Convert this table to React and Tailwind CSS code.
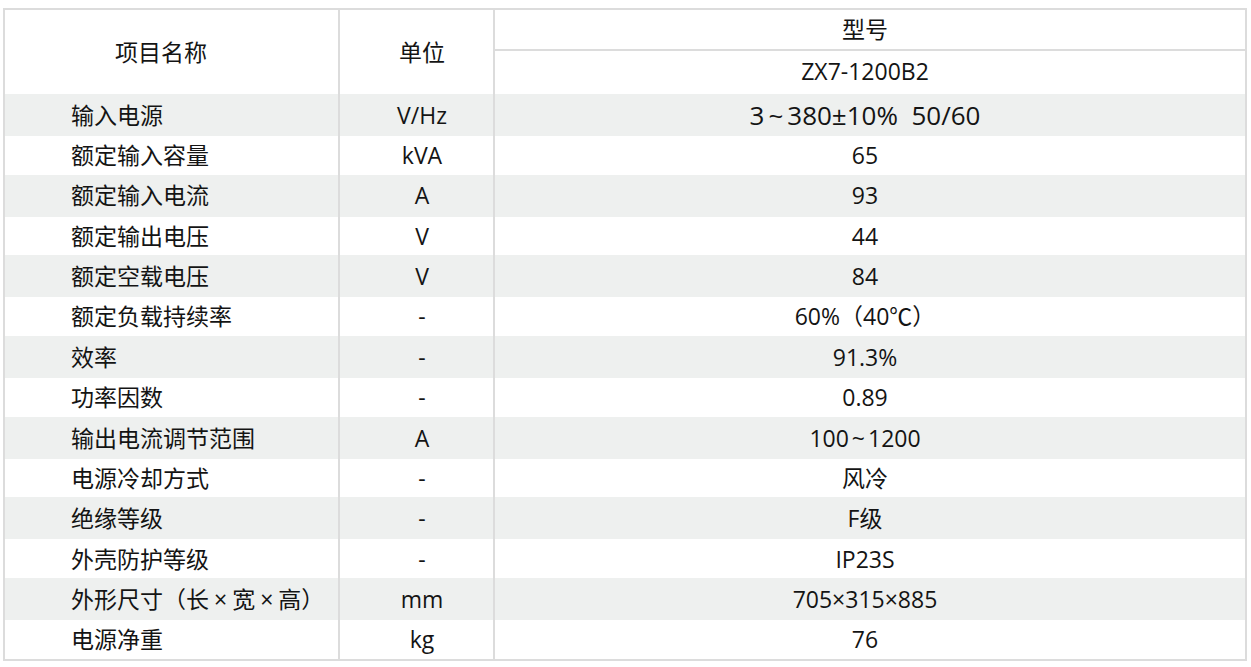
const Tilde = ({ gap }) => <span className={gap}>~</span>;
const X = () => <span className="mx-[5px]">×</span>;

const rows = [
  [
    "输入电源",
    "V/Hz",
    <span className="text-[26px]">
      3<Tilde gap="mx-[4px]" />380±10%{"  "}50/60
    </span>,
  ],
  ["额定输入容量", "kVA", "65"],
  ["额定输入电流", "A", "93"],
  ["额定输出电压", "V", "44"],
  ["额定空载电压", "V", "84"],
  ["额定负载持续率", "-", "60%（40℃）"],
  ["效率", "-", "91.3%"],
  ["功率因数", "-", "0.89"],
  ["输出电流调节范围", "A", <>100<Tilde gap="mx-[3px]" />1200</>],
  ["电源冷却方式", "-", "风冷"],
  ["绝缘等级", "-", "F级"],
  ["外壳防护等级", "-", "IP23S"],
  [<>外形尺寸（长<X />宽<X />高）</>, "mm", "705×315×885"],
  ["电源净重", "kg", "76"],
];

export default function App() {
  return (
    <div
      className="min-h-screen bg-white pt-[8px] pl-[3px] text-[#141414] text-[23px]"
      style={{ fontFamily: '"Open Sans", "Noto Sans CJK SC", sans-serif' }}
    >
      <div className="w-[1244px] border-2 border-[#dcdcdc]">
        {/* header */}
        <div className="grid grid-cols-[335px_155px_750px] h-[84px]">
          <div className="border-r-2 border-[#dcdcdc] flex items-center justify-center pr-[21px]">
            项目名称
          </div>
          <div className="border-r-2 border-[#dcdcdc] flex items-center justify-center pl-[11px]">
            单位
          </div>
          <div className="flex flex-col">
            <div className="h-[41px] flex items-center justify-center pr-[10px] border-b-2 border-[#dcdcdc]">
              型号
            </div>
            <div className="h-[41px] flex items-center justify-center pr-[10px]">
              ZX7-1200B2
            </div>
          </div>
        </div>

        {/* body */}
        {rows.map((r, i) => (
          <div
            key={i}
            className={
              i % 2 === 0
                ? "grid grid-cols-[335px_155px_750px] h-[42px] bg-[#eef0ef]"
                : "grid grid-cols-[335px_155px_750px] h-[38.7px] bg-white"
            }
          >
            <div className="border-r-2 border-[#dcdcdc] flex items-center pl-[66px] whitespace-pre">
              {r[0]}
            </div>
            <div className="border-r-2 border-[#dcdcdc] flex items-center justify-center pl-[11px]">
              {r[1]}
            </div>
            <div className="flex items-center justify-center pr-[10px] whitespace-pre">
              {r[2]}
            </div>
          </div>
        ))}
      </div>
    </div>
  );
}
